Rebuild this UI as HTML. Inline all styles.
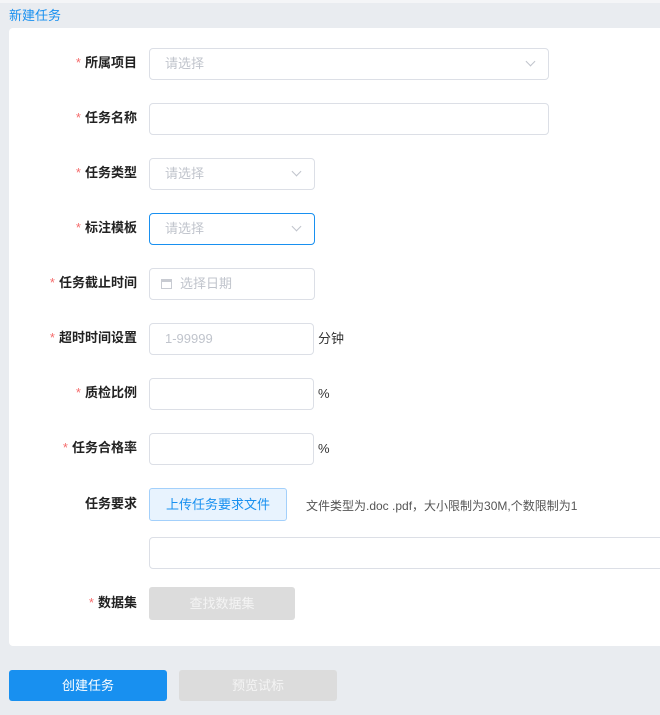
<!DOCTYPE html>
<html><head><meta charset="utf-8"><style>
*{box-sizing:border-box;margin:0;padding:0}
body{width:660px;height:715px;background:#e9ecf0;font-family:"Liberation Sans","Noto Sans CJK SC",sans-serif;position:relative;overflow:hidden;font-size:13px}
.top{position:absolute;left:0;top:0;width:660px;height:3px;background:#f4f5f7}
.title{position:absolute;left:9px;top:5px;color:#1890f0;font-size:13px}
.card{position:absolute;left:9px;top:28px;width:660px;height:618px;background:#fff;border-radius:4px}
.lbl{position:absolute;right:523px;font-weight:bold;color:#222;font-size:13px;line-height:16px;white-space:nowrap}
.lbl i{color:#f56c6c;font-style:normal;font-weight:normal;margin-right:4px}
.in{position:absolute;left:149px;height:32px;border:1px solid #dcdfe6;border-radius:4px;background:#fff;color:#c0c4cc;padding-left:15px;line-height:30px;font-size:13px}
.arr{position:absolute;right:14px;top:9px;width:7px;height:7px;border-right:1px solid #c0c4cc;border-bottom:1px solid #c0c4cc;transform:rotate(45deg)}
.unit{position:absolute;color:#333;font-size:13px}
.btn{position:absolute;border-radius:3px;text-align:center;font-size:13px}
</style></head><body>
<div class="top"></div>
<div class="title">新建任务</div>
<div class="card"></div>

<div class="lbl" style="top:55px"><i>*</i>所属项目</div>
<div class="in" style="top:48px;width:400px">请选择<span class="arr"></span></div>

<div class="lbl" style="top:110px"><i>*</i>任务名称</div>
<div class="in" style="top:103px;width:400px"></div>

<div class="lbl" style="top:165px"><i>*</i>任务类型</div>
<div class="in" style="top:158px;width:166px">请选择<span class="arr"></span></div>

<div class="lbl" style="top:220px"><i>*</i>标注模板</div>
<div class="in" style="top:213px;width:166px;border-color:#1890f0">请选择<span class="arr"></span></div>

<div class="lbl" style="top:275px"><i>*</i>任务截止时间</div>
<div class="in" style="top:268px;width:166px;padding-left:11px"><span style="display:inline-block;width:11px;height:10px;border:1px solid #c8cbd2;border-top-width:3px;vertical-align:-1px;margin-right:8px"></span>选择日期</div>

<div class="lbl" style="top:330px"><i>*</i>超时时间设置</div>
<div class="in" style="top:323px;width:165px">1-99999</div>
<div class="unit" style="left:318px;top:328px">分钟</div>

<div class="lbl" style="top:385px"><i>*</i>质检比例</div>
<div class="in" style="top:378px;width:165px"></div>
<div class="unit" style="left:318px;top:386px">%</div>

<div class="lbl" style="top:440px"><i>*</i>任务合格率</div>
<div class="in" style="top:433px;width:165px"></div>
<div class="unit" style="left:318px;top:441px">%</div>

<div class="lbl" style="top:496px">任务要求</div>
<div class="btn" style="left:149px;top:488px;width:138px;height:33px;line-height:31px;background:#e8f3fe;border:1px solid #a3d0fb;color:#1890f0">上传任务要求文件</div>
<div class="unit" style="left:306px;top:497px;font-size:12px;color:#555">文件类型为.doc .pdf，大小限制为30M,个数限制为1</div>
<div class="in" style="top:537px;width:520px;height:32px"></div>

<div class="lbl" style="top:595px"><i>*</i>数据集</div>
<div class="btn" style="left:149px;top:587px;width:146px;height:33px;line-height:33px;background:#dcdcdc;color:#f4f4f4">查找数据集</div>

<div class="btn" style="left:9px;top:670px;width:158px;height:31px;line-height:31px;background:#1890f0;color:#fff">创建任务</div>
<div class="btn" style="left:179px;top:670px;width:158px;height:31px;line-height:31px;background:#dcdcdc;color:#f4f4f4">预览试标</div>
</body></html>
